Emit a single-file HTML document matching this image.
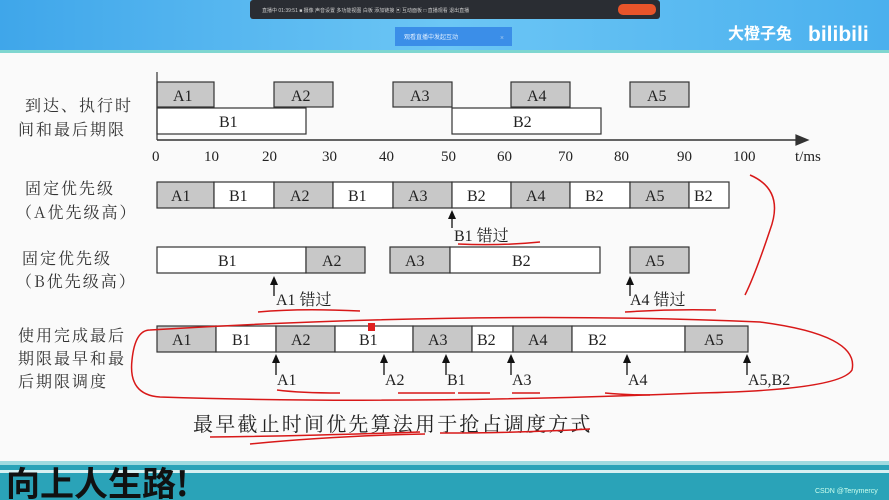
<!DOCTYPE html>
<html><head><meta charset="utf-8"><style>
body{margin:0;width:889px;height:500px;overflow:hidden;background:#fafafa;font-family:"Liberation Serif","Noto Serif CJK SC",serif}
svg{position:absolute;left:0;top:0}
</style></head><body>
<svg width="889" height="500" viewBox="0 0 889 500">
<defs><linearGradient id="hb" x1="0" x2="1"><stop offset="0" stop-color="#3fa6ea"/><stop offset=".5" stop-color="#6cc6f5"/><stop offset="1" stop-color="#4ab0ee"/></linearGradient></defs>
<rect width="889" height="50" fill="url(#hb)"/>
<rect y="50" width="889" height="3" fill="#7fd6d0"/>
<rect x="250" y="0" width="410" height="19" rx="3" fill="#2a2d33"/>
<text x="262" y="12" font-size="5" fill="#ccc" font-family="Liberation Sans,Noto Sans CJK SC,sans-serif">直播中  01:39:51  ■ 摄像   声音设置   多功能视图   白板   添加链接   ▣ 互动面板   □ 直播观看   退出直播</text>
<rect x="618" y="4" width="38" height="11" rx="5" fill="#e8542a"/>
<rect x="395" y="27" width="117" height="19" fill="#3b8ee8"/>
<text x="404" y="39" font-size="6" fill="#dfeeff" font-family="Liberation Sans,Noto Sans CJK SC,sans-serif">观看直播中发起互动</text>
<text x="500" y="40" font-size="7" fill="#cde">×</text>
<text x="728" y="39" font-size="16" font-weight="bold" fill="#fff" font-family="Noto Sans CJK SC,sans-serif">大橙子兔</text>
<text x="808" y="41" font-size="21" font-weight="bold" fill="#fff" font-family="Liberation Sans,sans-serif">bilibili</text>

<g font-family="Noto Serif CJK SC,serif" font-size="16" letter-spacing="2" fill="#333">
<text x="25" y="111">到达、执行时</text><text x="18" y="135">间和最后期限</text>
<text x="25" y="194">固定优先级</text><text x="16" y="218">（A优先级高）</text>
<text x="22" y="264">固定优先级</text><text x="16" y="287">（B优先级高）</text>
<text x="18" y="341">使用完成最后</text><text x="18" y="364">期限最早和最</text><text x="18" y="387">后期限调度</text>
</g>

<g stroke="#333" stroke-width="1.2" font-size="16" fill="#222">
<rect x="157" y="82" width="57" height="25" fill="#c8c8c8"/><rect x="274" y="82" width="59" height="25" fill="#c8c8c8"/><rect x="393" y="82" width="59" height="25" fill="#c8c8c8"/><rect x="511" y="82" width="59" height="25" fill="#c8c8c8"/><rect x="630" y="82" width="59" height="25" fill="#c8c8c8"/>
<rect x="157" y="108" width="149" height="26" fill="#fff"/><rect x="452" y="108" width="149" height="26" fill="#fff"/>
<line x1="157" y1="72" x2="157" y2="140"/>
<line x1="157" y1="140" x2="800" y2="140" stroke-width="1.5"/>
<path d="M796 135 L808 140 L796 145Z" fill="#333"/>
<rect x="157" y="182" width="57" height="26" fill="#c8c8c8"/><rect x="214" y="182" width="60" height="26" fill="#fff"/><rect x="274" y="182" width="59" height="26" fill="#c8c8c8"/><rect x="333" y="182" width="60" height="26" fill="#fff"/><rect x="393" y="182" width="59" height="26" fill="#c8c8c8"/><rect x="452" y="182" width="59" height="26" fill="#fff"/><rect x="511" y="182" width="59" height="26" fill="#c8c8c8"/><rect x="570" y="182" width="60" height="26" fill="#fff"/><rect x="630" y="182" width="59" height="26" fill="#c8c8c8"/><rect x="689" y="182" width="40" height="26" fill="#fff"/>
<rect x="157" y="247" width="149" height="26" fill="#fff"/><rect x="306" y="247" width="59" height="26" fill="#c8c8c8"/><rect x="390" y="247" width="60" height="26" fill="#c8c8c8"/><rect x="450" y="247" width="150" height="26" fill="#fff"/><rect x="630" y="247" width="59" height="26" fill="#c8c8c8"/>
<rect x="157" y="326" width="59" height="26" fill="#c8c8c8"/><rect x="216" y="326" width="60" height="26" fill="#fff"/><rect x="276" y="326" width="59" height="26" fill="#c8c8c8"/><rect x="335" y="326" width="78" height="26" fill="#fff"/><rect x="413" y="326" width="59" height="26" fill="#c8c8c8"/><rect x="472" y="326" width="41" height="26" fill="#fff"/><rect x="513" y="326" width="59" height="26" fill="#c8c8c8"/><rect x="572" y="326" width="113" height="26" fill="#fff"/><rect x="685" y="326" width="63" height="26" fill="#c8c8c8"/>
</g>
<rect x="368" y="323" width="7" height="8" fill="#e02020"/>
<g stroke="#111" stroke-width="1.3">
<line x1="452" y1="212" x2="452" y2="228"/><line x1="274" y1="278" x2="274" y2="296"/><line x1="630" y1="278" x2="630" y2="296"/>
<line x1="276" y1="356" x2="276" y2="375"/><line x1="384" y1="356" x2="384" y2="375"/><line x1="446" y1="356" x2="446" y2="375"/><line x1="511" y1="356" x2="511" y2="375"/><line x1="627" y1="356" x2="627" y2="375"/><line x1="747" y1="356" x2="747" y2="375"/>
</g>
<g fill="#111">
<path d="M448 219l4-9 4 9z"/><path d="M270 285l4-9 4 9z"/><path d="M626 285l4-9 4 9z"/>
<path d="M272 363l4-9 4 9z"/><path d="M380 363l4-9 4 9z"/><path d="M442 363l4-9 4 9z"/><path d="M507 363l4-9 4 9z"/><path d="M623 363l4-9 4 9z"/><path d="M743 363l4-9 4 9z"/>
</g>
<g font-family="Liberation Serif,Noto Serif CJK SC,serif" font-size="16" fill="#222">
<text x="173" y="101">A1</text><text x="291" y="101">A2</text><text x="410" y="101">A3</text><text x="527" y="101">A4</text><text x="647" y="101">A5</text>
<text x="219" y="127">B1</text><text x="513" y="127">B2</text>
<g font-size="15"><text x="152" y="161">0</text><text x="204" y="161">10</text><text x="262" y="161">20</text><text x="322" y="161">30</text><text x="379" y="161">40</text><text x="441" y="161">50</text><text x="497" y="161">60</text><text x="558" y="161">70</text><text x="614" y="161">80</text><text x="677" y="161">90</text><text x="733" y="161">100</text><text x="795" y="161">t/ms</text></g>
<text x="171" y="201">A1</text><text x="229" y="201">B1</text><text x="290" y="201">A2</text><text x="348" y="201">B1</text><text x="408" y="201">A3</text><text x="467" y="201">B2</text><text x="526" y="201">A4</text><text x="585" y="201">B2</text><text x="645" y="201">A5</text><text x="694" y="201">B2</text>
<text x="454" y="241">B1 错过</text>
<text x="218" y="266">B1</text><text x="322" y="266">A2</text><text x="405" y="266">A3</text><text x="512" y="266">B2</text><text x="645" y="266">A5</text>
<text x="276" y="305">A1 错过</text><text x="630" y="305">A4 错过</text>
<text x="172" y="345">A1</text><text x="232" y="345">B1</text><text x="291" y="345">A2</text><text x="359" y="345">B1</text><text x="428" y="345">A3</text><text x="477" y="345">B2</text><text x="528" y="345">A4</text><text x="588" y="345">B2</text><text x="704" y="345">A5</text>
<text x="277" y="385">A1</text><text x="385" y="385">A2</text><text x="447" y="385">B1</text><text x="512" y="385">A3</text><text x="628" y="385">A4</text><text x="748" y="385">A5,B2</text>
<text x="193" y="431" font-size="20" letter-spacing="2.2" font-family="Noto Serif CJK SC,serif">最早截止时间优先算法用于抢占调度方式</text>
</g>
<g stroke="#d81818" stroke-width="1.5" fill="none">
<path d="M458 244 Q500 246 540 242"/><path d="M258 312 Q300 308 360 311"/><path d="M625 312 Q670 309 716 310"/>
<path d="M750 175 Q785 190 770 230 Q755 275 745 295"/>
<path d="M150 330 Q480 310 760 322 Q860 335 852 370 Q840 390 700 393 Q400 405 160 397 Q128 395 132 360 Q135 330 150 330"/>
<path d="M277 390 Q300 393 340 393"/><path d="M398 393 L455 393"/><path d="M458 393 L490 393"/><path d="M512 393 L540 393"/><path d="M605 393 Q625 395 650 395"/>
<path d="M210 437 Q300 436 420 432"/><path d="M250 444 Q330 436 425 434"/><path d="M440 433 Q520 433 590 429"/>
</g>
<rect y="461" width="889" height="39" fill="#2aa3b8"/>
<rect y="461" width="889" height="4" fill="#9fdbe0"/>
<rect y="470" width="889" height="3" fill="#d8f0f2"/>
<text x="6" y="496" font-size="34" font-weight="bold" fill="#111" font-family="Noto Sans CJK SC,sans-serif">向上人生路!</text>
<text x="815" y="493" font-size="7" fill="#cfe" font-family="Liberation Sans,sans-serif">CSDN @Tenymercy</text>
</svg>
</body></html>
